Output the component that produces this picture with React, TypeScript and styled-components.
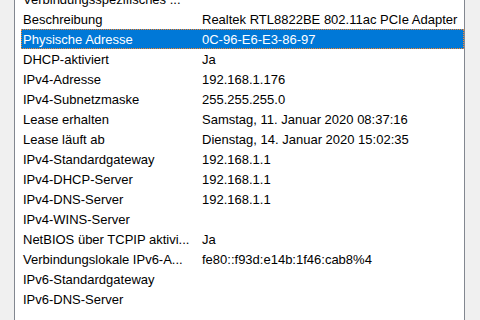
import * as React from 'react';
import styled, { createGlobalStyle } from 'styled-components';

const GlobalStyle = createGlobalStyle`
    html, body {
        margin: 0;
        padding: 0;
        width: 480px;
        height: 320px;
        overflow: hidden;
        background: #f0f0f0;
    }
`;

const Frame = styled.div`
    display: flex;
    width: 480px;
    height: 320px;
    box-sizing: border-box;
    padding: 0 15px 0 14px;
    background: #f0f0f0;
`;

const ListView = styled.div`
    flex: 1;
    background: #ffffff;
    border-left: 1px solid #828790;
    border-right: 1px solid #828790;
    overflow: hidden;
`;

// scrolled down a bit, so the first row is cut off at the top
const Rows = styled.div`
    margin-top: -11px;
    padding-left: 6px;
`;

const Row = styled.div<{ $selected?: boolean }>`
    display: grid;
    grid-template-columns: 179px 1fr;
    height: 20px;
    box-sizing: border-box;
    font-family: "Liberation Sans", Arial, sans-serif;
    font-size: 13px;
    line-height: 20px;
    color: ${p => (p.$selected ? '#ffffff' : '#000000')};
    background: ${p => (p.$selected ? '#0078d7' : 'transparent')};
    outline: ${p => (p.$selected ? '1px dotted #ff8728' : 'none')};
    outline-offset: -1px;
    overflow: hidden;
`;

const Cell = styled.span`
    padding: 1px 0 0 2px;
    white-space: nowrap;
    overflow: hidden;
`;

const rows: [string, string][] = [
    ['Verbindungsspezifisches ...', ''],
    ['Beschreibung', 'Realtek RTL8822BE 802.11ac PCIe Adapter'],
    ['Physische Adresse', '0C-96-E6-E3-86-97'],
    ['DHCP-aktiviert', 'Ja'],
    ['IPv4-Adresse', '192.168.1.176'],
    ['IPv4-Subnetzmaske', '255.255.255.0'],
    ['Lease erhalten', 'Samstag, 11. Januar 2020 08:37:16'],
    ['Lease läuft ab', 'Dienstag, 14. Januar 2020 15:02:35'],
    ['IPv4-Standardgateway', '192.168.1.1'],
    ['IPv4-DHCP-Server', '192.168.1.1'],
    ['IPv4-DNS-Server', '192.168.1.1'],
    ['IPv4-WINS-Server', ''],
    ['NetBIOS über TCPIP aktivi...', 'Ja'],
    ['Verbindungslokale IPv6-A...', 'fe80::f93d:e14b:1f46:cab8%4'],
    ['IPv6-Standardgateway', ''],
    ['IPv6-DNS-Server', ''],
    ['', ''],
];

const App = () => {
    const selected = 2;

    return (
        <>
            <GlobalStyle />
            <Frame>
                <ListView>
                    <Rows>
                        {rows.map(([name, value], i) => (
                            <Row key={i} $selected={i === selected}>
                                <Cell>{name}</Cell>
                                <Cell>{value}</Cell>
                            </Row>
                        ))}
                    </Rows>
                </ListView>
            </Frame>
        </>
    );
};

export default App;
